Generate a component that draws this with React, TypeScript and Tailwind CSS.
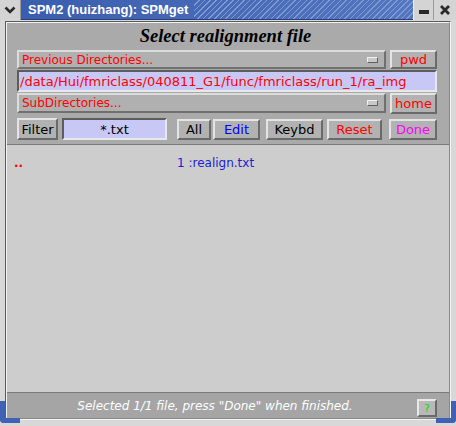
import React from 'react';

// Motif-style raised button
function Btn({ label, color, w, h = 'h-[21px]' }: { label: string; color: string; w: string; h?: string }) {
  return (
    <div
      className={`${w} ${h} shrink-0 flex items-center justify-center bg-[#b2b2b2] border-2 border-t-[#e4e4e4] border-l-[#e4e4e4] border-b-[#6a6a6a] border-r-[#6a6a6a] text-[13px] leading-none ${color}`}
    >
      {label}
    </div>
  );
}

function Dropdown({ label, h }: { label: string; h: string }) {
  return (
    <div className={`w-[369px] ${h} shrink-0 flex items-center justify-between bg-[#b0b0b0] border-2 border-t-[#dcdcdc] border-l-[#dcdcdc] border-b-[#707070] border-r-[#707070] pl-[3px] pr-[6px] text-[12px] leading-none text-[#ff0000]`}>
      <span>{label}</span>
      <span className="w-[11px] h-[6px] bg-[#c8c8c8] border border-t-[#f0f0f0] border-l-[#f0f0f0] border-b-[#606060] border-r-[#606060]" />
    </div>
  );
}

function Field({ text, className }: { text: string; className: string }) {
  return (
    <div
      className={`shrink-0 bg-[#c8c8f6] border-2 border-t-[#5c5c5c] border-l-[#5c5c5c] border-b-[#e8e8e8] border-r-[#e8e8e8] flex items-center text-[13px] leading-none ${className}`}
    >
      {text}
    </div>
  );
}

export default function App() {
  return (
    <div className="relative w-[456px] h-[426px] bg-[#d8d8d8] flex flex-col font-['DejaVu_Sans',sans-serif] overflow-hidden">
      {/* title bar */}
      <div className="h-[20px] w-[456px] flex shrink-0">
        <div className="w-[21px] min-w-[21px] h-[20px] bg-[#d4d4d4] border-r border-[#9a9a9a] flex items-center justify-center">
          <svg width="12" height="8" viewBox="0 0 12 8">
            <path d="M1.5 1.5 L6 6 L10.5 1.5" fill="none" stroke="#2a2a2a" strokeWidth="2.6" />
          </svg>
        </div>
        <div className="flex-1 min-w-0 h-[20px] flex bg-[linear-gradient(90deg,#3a5eae,#5376c0)] border-b border-[#2a3f78]">
          <div className="pl-[7px] pr-[6px] flex items-center text-white font-bold text-[13px] leading-none font-['Liberation_Sans',sans-serif] whitespace-nowrap">
            SPM2 (huizhang): SPMget
          </div>
          <div className="flex-1 bg-[repeating-linear-gradient(-45deg,#7f9ad2_0px,#7f9ad2_1px,transparent_1px,transparent_4px)]" />
        </div>
        <div className="w-[21px] min-w-[21px] h-[20px] bg-[#d4d4d4] border-l border-[#f0f0f0] border-r border-r-[#9a9a9a] flex items-center justify-center">
          <div className="w-[10px] h-[4px] bg-[#2a2a2a] mt-[3px]" />
        </div>
        <div className="w-[22px] min-w-[22px] h-[20px] bg-[#d4d4d4] flex items-center justify-center">
          <svg width="12" height="12" viewBox="0 0 12 12">
            <path d="M2 2 L10 10 M10 2 L2 10" stroke="#2a2a2a" strokeWidth="2.8" />
          </svg>
        </div>
      </div>

      {/* window body */}
      <div className="flex-1 flex flex-col pl-[5px] pr-[5px] pb-[6px] pt-[1px]">
        <div className="flex-1 flex flex-col border-l border-t border-[#5a5a5a] border-r border-r-[#f4f4f4] border-b border-b-[#f4f4f4]">
          <div className="flex-1 flex flex-col border border-[#f2f2f2] border-r-[#8a8a8a] border-b-[#8a8a8a]">
            {/* top control panel */}
            <div className="h-[122px] shrink-0 bg-[#aaaaaa] border-b border-[#7a7a7a] flex flex-col pl-[10px]">
              <div className="h-[27px] shrink-0 flex items-center justify-center pr-[15px] font-['Liberation_Serif',serif] italic font-bold text-[18.5px] leading-none text-black">
                Select realignment file
              </div>
              <div className="flex gap-[4px]">
                <Dropdown label="Previous Directories..." h="h-[19px]" />
                <Btn label="pwd" color="text-[#ff0000]" w="w-[47px]" h="h-[19px]" />
              </div>
              <Field
                text="/data/Hui/fmriclass/040811_G1/func/fmriclass/run_1/ra_img"
                className="w-[420px] h-[22px] mt-[1px] pl-[1px] text-[#ff0000]"
              />
              <div className="flex gap-[4px] mt-[1px]">
                <Dropdown label="SubDirectories..." h="h-[20px]" />
                <Btn label="home" color="text-[#ff0000]" w="w-[47px]" />
              </div>
              <div className="flex items-center mt-[4px]">
                <div className="w-[41px] h-[22px] shrink-0 flex items-center justify-center bg-[#b2b2b2] border-2 border-t-[#e4e4e4] border-l-[#e4e4e4] border-b-[#6a6a6a] border-r-[#6a6a6a] text-[13px] leading-none text-black">
                  Filter
                </div>
                <Field text="*.txt" className="ml-[4px] w-[105px] h-[22px] justify-center text-black" />
                <div className="ml-[10px]">
                  <Btn label="All" color="text-black" w="w-[34px]" />
                </div>
                <div className="ml-[2px]">
                  <Btn label="Edit" color="text-[#0000ff]" w="w-[47px]" />
                </div>
                <div className="ml-[6px]">
                  <Btn label="Keybd" color="text-black" w="w-[57px]" />
                </div>
                <div className="ml-[4px]">
                  <Btn label="Reset" color="text-[#ff0000]" w="w-[55px]" />
                </div>
                <div className="ml-[7px]">
                  <Btn label="Done" color="text-[#ff00ff]" w="w-[48px]" />
                </div>
              </div>
            </div>

            {/* file list */}
            <div className="flex-1 bg-[#cdcdcd]">
              <div className="flex items-start pt-[12px] pl-[7px] text-[12px] leading-none">
                <span className="text-[#ff0000] font-bold w-[163px]">..</span>
                <span className="text-[#1c1cd0]">1 :realign.txt</span>
              </div>
            </div>

            {/* status bar */}
            <div className="h-[26px] shrink-0 bg-[#a5a5a5] border-t border-[#7a7a7a] flex items-center">
              <div className="flex-1 text-center italic text-white text-[12px] leading-none pl-[6px]">
                Selected 1/1 file, press &quot;Done&quot; when finished.
              </div>
              <div className="w-[20px] h-[18px] mr-[12px] mt-[5px] flex items-center justify-center bg-[#b8b8b8] border-2 border-t-[#e8e8e8] border-l-[#e8e8e8] border-b-[#6a6a6a] border-r-[#6a6a6a] text-[11px] leading-none text-[#00e000]">
                ?
              </div>
            </div>
          </div>
        </div>
      </div>

      {/* resize corners */}
      <div className="absolute left-0 bottom-[3px] w-[20px] h-[22px] border-l-[5px] border-b-[5px] border-[#3f62b4] rounded-bl-[4px]" />
      <div className="absolute right-0 bottom-[3px] w-[20px] h-[22px] border-r-[5px] border-b-[5px] border-[#3f62b4] rounded-br-[4px]" />
    </div>
  );
}
